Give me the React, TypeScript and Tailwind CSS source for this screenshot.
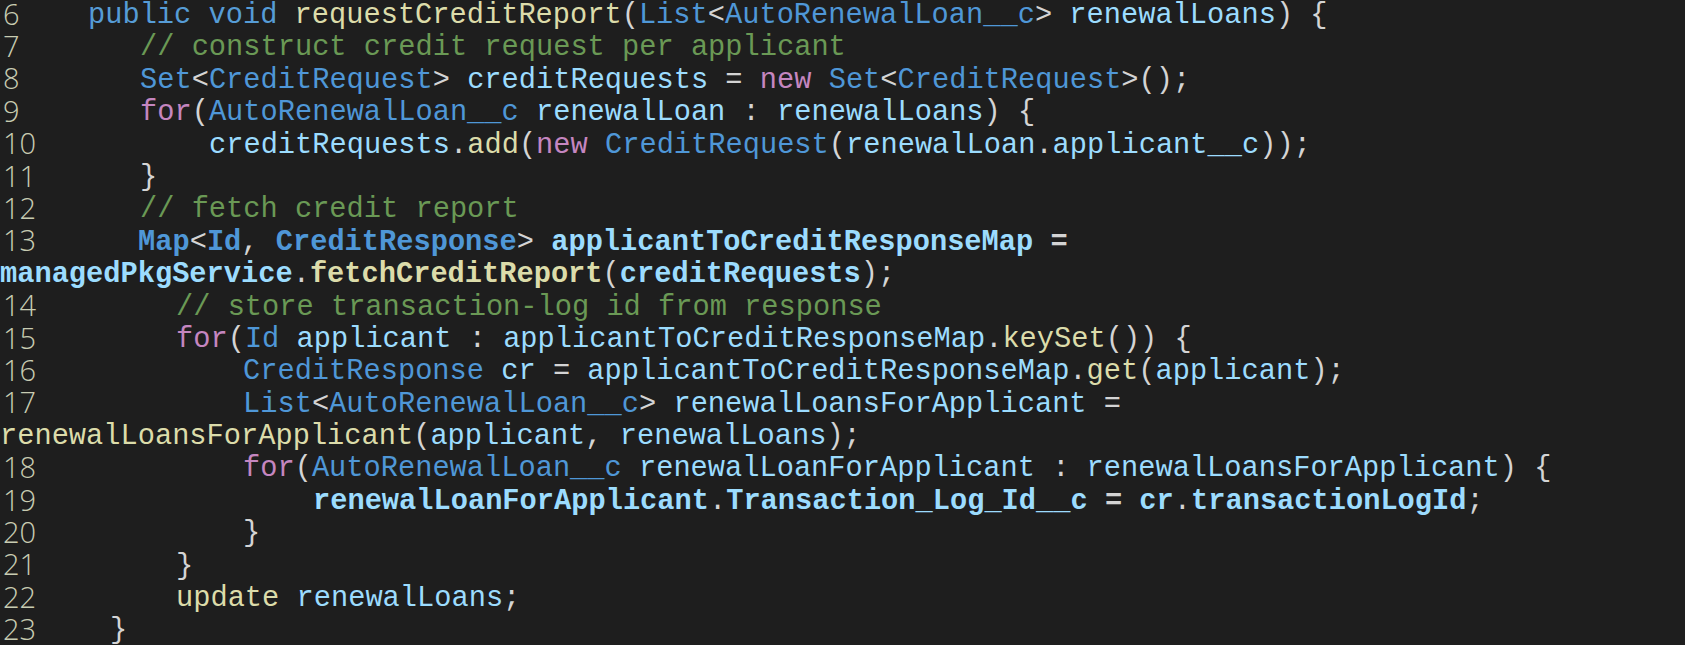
import React from 'react';

type Tok = [string, string];

const KW = 'text-[#569cd6]';
const TY = 'text-[#4f97d7]';
const FN = 'text-[#dcdcaa]';
const VAR = 'text-[#9cdcfe]';
const PU = 'text-[#d4d4d4]';
const CTL = 'text-[#c586c0]';
const CM = 'text-[#6a9955]';
const B = ' font-bold';

// indent is measured from the end of the 88px gutter; wrapped rows have no gutter
type Row = { n?: number; indent: string; toks: Tok[] };

const rows: Row[] = [
  {
    n: 6,
    indent: 'pl-0',
    toks: [
      ['public void ', KW],
      ['requestCreditReport', FN],
      ['(', PU],
      ['List', TY],
      ['<', PU],
      ['AutoRenewalLoan__c', TY],
      ['> ', PU],
      ['renewalLoans', VAR],
      [') {', PU],
    ],
  },
  { n: 7, indent: 'pl-[52px]', toks: [['// construct credit request per applicant', CM]] },
  {
    n: 8,
    indent: 'pl-[52px]',
    toks: [
      ['Set', TY],
      ['<', PU],
      ['CreditRequest', TY],
      ['> ', PU],
      ['creditRequests', VAR],
      [' = ', PU],
      ['new ', CTL],
      ['Set', TY],
      ['<', PU],
      ['CreditRequest', TY],
      ['>();', PU],
    ],
  },
  {
    n: 9,
    indent: 'pl-[52px]',
    toks: [
      ['for', CTL],
      ['(', PU],
      ['AutoRenewalLoan__c ', TY],
      ['renewalLoan', VAR],
      [' : ', PU],
      ['renewalLoans', VAR],
      [') {', PU],
    ],
  },
  {
    n: 10,
    indent: 'pl-[121px]',
    toks: [
      ['creditRequests', VAR],
      ['.', PU],
      ['add', FN],
      ['(', PU],
      ['new ', CTL],
      ['CreditRequest', TY],
      ['(', PU],
      ['renewalLoan', VAR],
      ['.', PU],
      ['applicant__c', VAR],
      ['));', PU],
    ],
  },
  { n: 11, indent: 'pl-[52px]', toks: [['}', PU]] },
  { n: 12, indent: 'pl-[52px]', toks: [['// fetch credit report', CM]] },
  {
    n: 13,
    indent: 'pl-[50px]',
    toks: [
      ['Map', TY + B],
      ['<', PU],
      ['Id', TY + B],
      [', ', PU],
      ['CreditResponse', TY + B],
      ['> ', PU],
      ['applicantToCreditResponseMap', VAR + B],
      [' =', PU + B],
    ],
  },
  {
    indent: 'pl-0',
    toks: [
      ['managedPkgService', VAR + B],
      ['.', PU],
      ['fetchCreditReport', FN + B],
      ['(', PU],
      ['creditRequests', VAR + B],
      [');', PU],
    ],
  },
  { n: 14, indent: 'pl-[88px]', toks: [['// store transaction-log id from response', CM]] },
  {
    n: 15,
    indent: 'pl-[88px]',
    toks: [
      ['for', CTL],
      ['(', PU],
      ['Id ', TY],
      ['applicant', VAR],
      [' : ', PU],
      ['applicantToCreditResponseMap', VAR],
      ['.', PU],
      ['keySet', FN],
      ['()) {', PU],
    ],
  },
  {
    n: 16,
    indent: 'pl-[155px]',
    toks: [
      ['CreditResponse ', TY],
      ['cr', VAR],
      [' = ', PU],
      ['applicantToCreditResponseMap', VAR],
      ['.', PU],
      ['get', FN],
      ['(', PU],
      ['applicant', VAR],
      [');', PU],
    ],
  },
  {
    n: 17,
    indent: 'pl-[155px]',
    toks: [
      ['List', TY],
      ['<', PU],
      ['AutoRenewalLoan__c', TY],
      ['> ', PU],
      ['renewalLoansForApplicant', VAR],
      [' =', PU],
    ],
  },
  {
    indent: 'pl-0',
    toks: [
      ['renewalLoansForApplicant', FN],
      ['(', PU],
      ['applicant', VAR],
      [', ', PU],
      ['renewalLoans', VAR],
      [');', PU],
    ],
  },
  {
    n: 18,
    indent: 'pl-[155px]',
    toks: [
      ['for', CTL],
      ['(', PU],
      ['AutoRenewalLoan__c ', TY],
      ['renewalLoanForApplicant', VAR],
      [' : ', PU],
      ['renewalLoansForApplicant', VAR],
      [') {', PU],
    ],
  },
  {
    n: 19,
    indent: 'pl-[225px]',
    toks: [
      ['renewalLoanForApplicant', VAR + B],
      ['.', PU],
      ['Transaction_Log_Id__c', VAR + B],
      [' = ', PU + B],
      ['cr', VAR + B],
      ['.', PU],
      ['transactionLogId', VAR + B],
      [';', PU],
    ],
  },
  { n: 20, indent: 'pl-[155px]', toks: [['}', PU]] },
  { n: 21, indent: 'pl-[88px]', toks: [['}', PU]] },
  {
    n: 22,
    indent: 'pl-[88px]',
    toks: [
      ['update ', FN],
      ['renewalLoans', VAR],
      [';', PU],
    ],
  },
  { n: 23, indent: 'pl-[22px]', toks: [['}', PU]] },
];

function CodeRow({ row }: { row: Row }) {
  return (
    <div className="flex h-[32.4px] items-center">
      {row.n !== undefined && (
        <span className="mb-[5px] w-[88px] shrink-0 pl-[3px] text-[29px] leading-[26px] font-light text-[#c8ccb2] [font-family:'Open_Sans',sans-serif]">
          {row.n}
        </span>
      )}
      <div className={`${row.indent} whitespace-pre leading-[32.4px]`}>
        {row.toks.map(([t, c], i) => (
          <span key={i} className={c}>
            {t}
          </span>
        ))}
      </div>
    </div>
  );
}

export default function App() {
  return (
    <div className="h-[645px] w-[1685px] overflow-hidden bg-[#1e1e1e]">
      <div className="text-[28.7px] [font-family:'Liberation_Mono',monospace]">
        {rows.map((r, i) => (
          <CodeRow key={i} row={r} />
        ))}
      </div>
    </div>
  );
}
